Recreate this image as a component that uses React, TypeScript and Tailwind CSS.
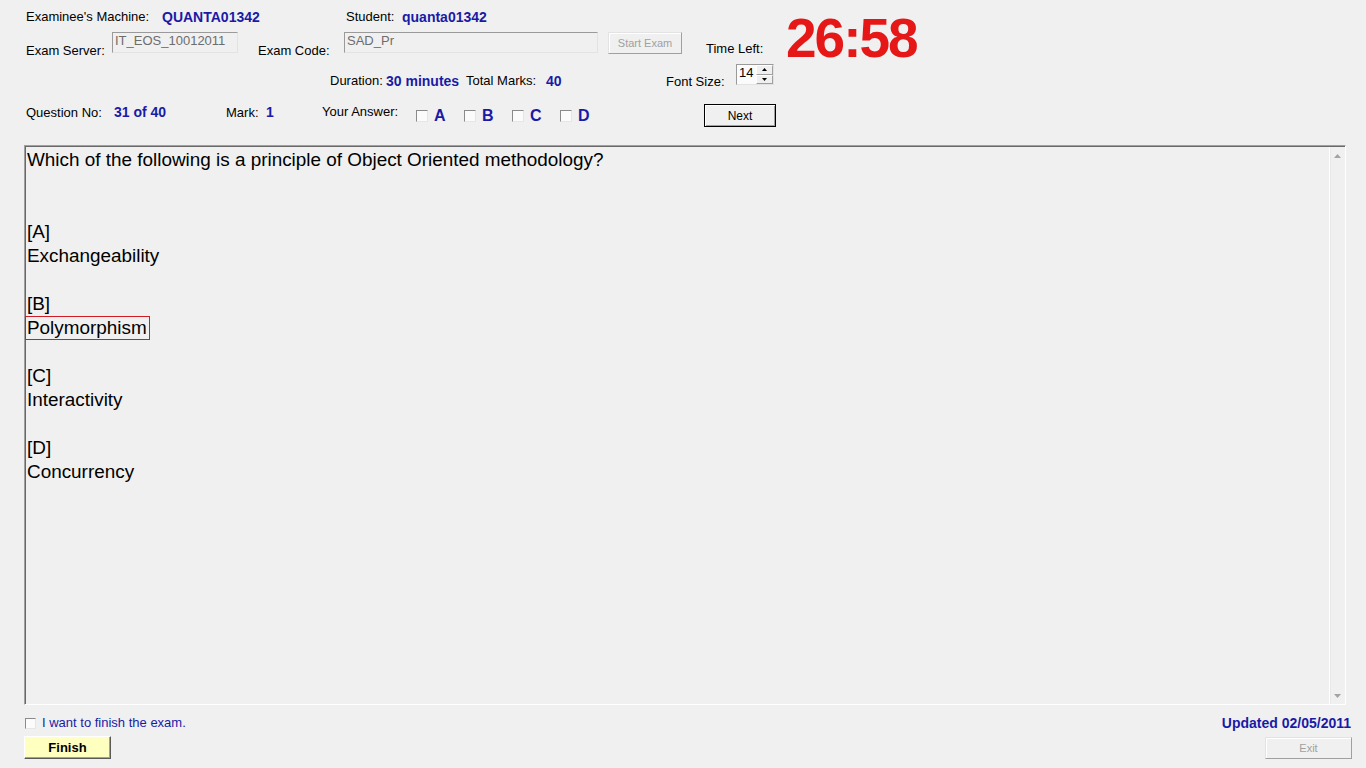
import React from "react";

const BLUE = "text-[#1a1aa6]";

function Check({ className = "" }: { className?: string }) {
  return (
    <span
      className={
        "block shrink-0 bg-[#fbfbfb] border border-t-[#8a8a8a] border-l-[#8a8a8a] border-r-[#e6e6e6] border-b-[#e6e6e6] " +
        className
      }
    />
  );
}

function Line({ children }: { children?: React.ReactNode }) {
  return <div className="h-[24px] leading-[24px] whitespace-nowrap">{children}</div>;
}

export default function App() {
  return (
    <div className="w-[1366px] h-[768px] overflow-hidden bg-[#f0f0f0] flex flex-col text-black font-['Liberation_Sans','Arial',sans-serif] text-[13px] leading-[16px]">
      {/* Header: rows 1-2 + timer */}
      <div className="flex h-[62px] shrink-0">
        <div className="w-[786px] shrink-0 flex flex-col">
          <div className="flex h-[32px] pt-[9px] pl-[26px] items-start">
            <span className="w-[136px] shrink-0">Examinee's Machine:</span>
            <span className={"w-[184px] shrink-0 font-bold text-[14px] " + BLUE}>QUANTA01342</span>
            <span className="w-[56px] shrink-0">Student:</span>
            <span className={"font-bold text-[14px] " + BLUE}>quanta01342</span>
          </div>
          <div className="flex h-[30px] pl-[26px] items-start">
            <span className="w-[86px] shrink-0 mt-[11px]">Exam Server:</span>
            <div className="w-[126px] h-[21px] shrink-0 border border-t-[#9a9a9a] border-l-[#9a9a9a] border-r-[#e3e3e3] border-b-[#e3e3e3] pl-[2px] text-[#6d6d6d] whitespace-nowrap overflow-hidden">
              IT_EOS_10012011
            </div>
            <span className="w-[20px] shrink-0" />
            <span className="w-[86px] shrink-0 mt-[11px]">Exam Code:</span>
            <div className="w-[254px] h-[21px] shrink-0 border border-t-[#9a9a9a] border-l-[#9a9a9a] border-r-[#e3e3e3] border-b-[#e3e3e3] pl-[2px] text-[#6d6d6d] whitespace-nowrap overflow-hidden">
              SAD_Pr
            </div>
            <span className="w-[10px] shrink-0" />
            <div className="w-[74px] h-[22px] shrink-0 flex items-center justify-center border border-t-[#e3e3e3] border-l-[#e3e3e3] border-r-[#a0a0a0] border-b-[#a0a0a0] shadow-[inset_1px_1px_0_#ffffff] text-[11px] text-[#a0a0a0]">
              Start Exam
            </div>
            <span className="w-[24px] shrink-0" />
            <span className="mt-[9px]">Time Left:</span>
          </div>
        </div>
        <div className="mt-[11px] text-[55px] leading-[55px] font-bold tracking-[-2px] text-[#e61717] whitespace-nowrap">
          26:58
        </div>
      </div>

      {/* Row 3 */}
      <div className="flex h-[38px] shrink-0 pl-[330px] items-start">
        <span className="w-[56px] shrink-0 mt-[11px]">Duration:</span>
        <span className={"w-[80px] shrink-0 mt-[11px] font-bold text-[14px] " + BLUE}>30 minutes</span>
        <span className="w-[80px] shrink-0 mt-[11px]">Total Marks:</span>
        <span className={"w-[120px] shrink-0 mt-[11px] font-bold text-[14px] " + BLUE}>40</span>
        <span className="w-[70px] shrink-0 mt-[12px]">Font Size:</span>
        <div className="mt-[2px] w-[38px] h-[21px] shrink-0 flex bg-[#fbfbfb] border border-t-[#9a9a9a] border-l-[#9a9a9a] border-r-[#e3e3e3] border-b-[#e3e3e3]">
          <span className="flex-1 pl-[2px]">14</span>
          <div className="w-[17px] flex flex-col">
            <div className="flex-1 flex items-center justify-center bg-[#f0f0f0] border border-t-[#ffffff] border-l-[#ffffff] border-r-[#a0a0a0] border-b-[#a0a0a0]">
              <svg width="5" height="3" viewBox="0 0 5 3">
                <path d="M2.5 0 L5 3 L0 3 Z" fill="#000" />
              </svg>
            </div>
            <div className="flex-1 flex items-center justify-center bg-[#f0f0f0] border border-t-[#ffffff] border-l-[#ffffff] border-r-[#a0a0a0] border-b-[#a0a0a0]">
              <svg width="5" height="3" viewBox="0 0 5 3">
                <path d="M0 0 L5 0 L2.5 3 Z" fill="#000" />
              </svg>
            </div>
          </div>
        </div>
      </div>

      {/* Row 4 */}
      <div className="flex h-[45px] shrink-0 pl-[26px] items-start">
        <span className="w-[88px] shrink-0 mt-[5px]">Question No:</span>
        <span className={"w-[112px] shrink-0 mt-[4px] font-bold text-[14px] " + BLUE}>31 of 40</span>
        <span className="w-[40px] shrink-0 mt-[5px]">Mark:</span>
        <span className={"w-[56px] shrink-0 mt-[4px] font-bold text-[14px] " + BLUE}>1</span>
        <span className="w-[94px] shrink-0 mt-[4px]">Your Answer:</span>
        {["A", "B", "C", "D"].map((l) => (
          <div key={l} className="w-[48px] shrink-0 flex items-start">
            <Check className="w-[12px] h-[12px] mt-[10px]" />
            <span className={"ml-[6px] mt-[8px] font-bold text-[16px] " + BLUE}>{l}</span>
          </div>
        ))}
        <span className="w-[96px] shrink-0" />
        <div className="mt-[4px] w-[72px] h-[23px] shrink-0 border border-black flex items-center justify-center text-[12px] bg-[#f0f0f0] shadow-[inset_1px_1px_0_#ffffff,inset_-1px_-1px_0_#a0a0a0]">
          Next
        </div>
      </div>

      {/* Question box */}
      <div className="ml-[24px] w-[1322px] h-[560px] shrink-0 flex border border-t-[#a0a0a0] border-l-[#a0a0a0] border-r-[#ffffff] border-b-[#ffffff]">
        <div className="flex-1 flex border-t border-l border-[#696969] border-r-0 border-b-0">
          <div className="flex-1 pl-[1px] pt-[1px] text-[18.9px]">
            <Line>Which of the following is a principle of Object Oriented methodology?</Line>
            <Line />
            <Line />
            <Line>[A]</Line>
            <Line>Exchangeability</Line>
            <Line />
            <Line>[B]</Line>
            <Line>
              <span className="inline-block -ml-[2px] pl-[1px] pr-[2px] leading-[22px] border border-[#d01c24]">
                Polymorphism
              </span>
            </Line>
            <Line />
            <Line>[C]</Line>
            <Line>Interactivity</Line>
            <Line />
            <Line>[D]</Line>
            <Line>Concurrency</Line>
          </div>
          <div className="w-[16px] shrink-0 flex flex-col justify-between border-l border-[#ffffff] shadow-[inset_1px_0_0_#e8e8e8]">
            <div className="h-[17px] flex items-center justify-center">
              <svg width="7" height="4" viewBox="0 0 7 4">
                <path d="M3.5 0 L7 4 L0 4 Z" fill="#a3a3a3" />
              </svg>
            </div>
            <div className="h-[17px] flex items-center justify-center">
              <svg width="7" height="4" viewBox="0 0 7 4">
                <path d="M0 0 L7 0 L3.5 4 Z" fill="#a3a3a3" />
              </svg>
            </div>
          </div>
        </div>
      </div>

      {/* Bottom rows */}
      <div className="flex h-[31px] shrink-0 items-start">
        <Check className="ml-[25px] mt-[13px] w-[11px] h-[11px]" />
        <span className={"ml-[6px] mt-[10px] " + BLUE}>I want to finish the exam.</span>
        <span className={"ml-auto mr-[15px] mt-[10px] font-bold text-[14px] " + BLUE}>Updated 02/05/2011</span>
      </div>
      <div className="flex h-[32px] shrink-0 items-start justify-between">
        <div className="ml-[24px] w-[87px] h-[23px] flex items-center justify-center bg-[#ffffc0] border border-t-[#ffffff] border-l-[#ffffff] border-r-[#5a5a5a] border-b-[#5a5a5a] shadow-[inset_-1px_-1px_0_#a0a0a0] font-bold text-[13px]">
          Finish
        </div>
        <div className="mr-[14px] mt-[1px] w-[87px] h-[22px] flex items-center justify-center border border-t-[#e3e3e3] border-l-[#e3e3e3] border-r-[#a0a0a0] border-b-[#a0a0a0] shadow-[inset_1px_1px_0_#ffffff] text-[11px] text-[#a0a0a0]">
          Exit
        </div>
      </div>
    </div>
  );
}
